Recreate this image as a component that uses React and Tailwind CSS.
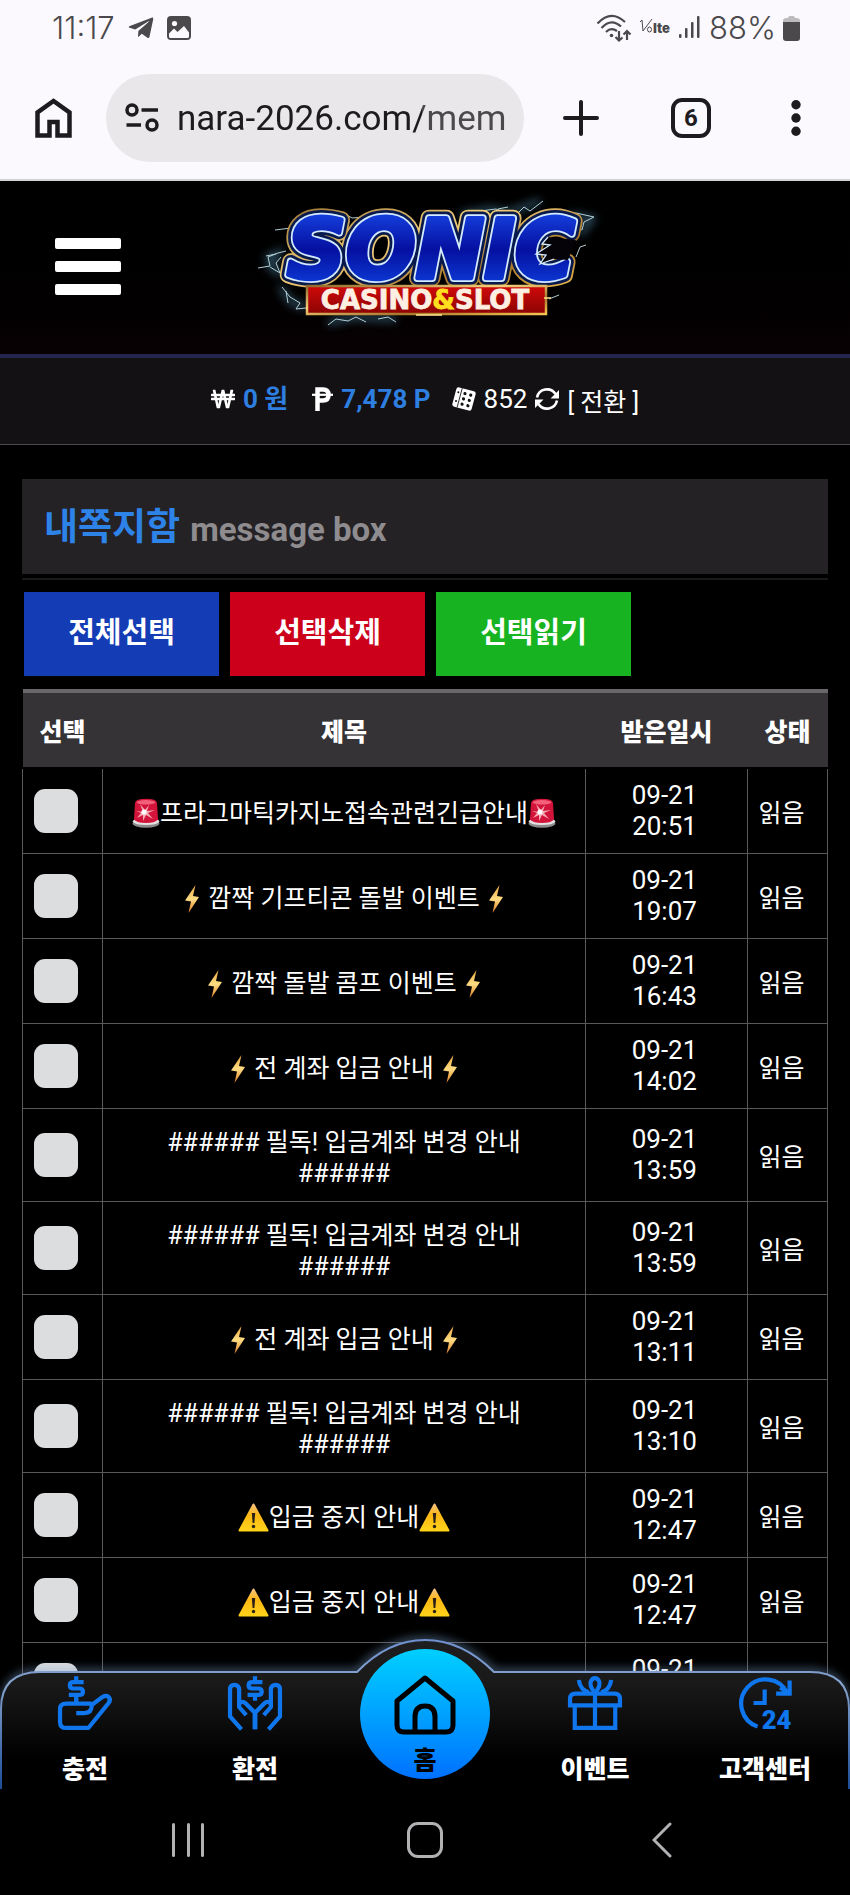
import { FaTelegramPlane, FaWonSign } from 'react-icons/fa';

// Message box page of the mobile casino site, inside the phone's browser

const MESSAGES = [
    { icon: 'siren', title: '프라그마틱카지노접속관련긴급안내', date: '09-21', time: '20:51' },
    { icon: 'bolt', title: '깜짝 기프티콘 돌발 이벤트', date: '09-21', time: '19:07' },
    { icon: 'bolt', title: '깜짝 돌발 콤프 이벤트', date: '09-21', time: '16:43' },
    { icon: 'bolt', title: '전 계좌 입금 안내', date: '09-21', time: '14:02' },
    { title: '###### 필독! 입금계좌 변경 안내 ######', date: '09-21', time: '13:59' },
    { title: '###### 필독! 입금계좌 변경 안내 ######', date: '09-21', time: '13:59' },
    { icon: 'bolt', title: '전 계좌 입금 안내', date: '09-21', time: '13:11' },
    { title: '###### 필독! 입금계좌 변경 안내 ######', date: '09-21', time: '13:10' },
    { icon: 'warning', title: '입금 중지 안내', date: '09-21', time: '12:47' },
    { icon: 'warning', title: '입금 중지 안내', date: '09-21', time: '12:47' },
    { icon: 'warning', title: '입금 중지 안내', date: '09-21', time: '12:47' },
];

function SirenIcon() {
    return (
        <svg viewBox="0 0 28 30" className="inline-block w-7 h-[30px] align-[-6px]" aria-hidden="true">
            <ellipse cx="14" cy="25.5" rx="13.5" ry="4.2" fill="#8d8a8c" />
            <path d="M.5 23.5Q2 21 4 21h20q2.500 0 3.500 2.500Q25 27 14 27T.5 23.500Z" fill="#e4e2e3" />
            <path d="M3 5Q3.500.8 14 .8T25 5l1 16.500Q23 25 14 25T2 21.500Z" fill="#d3143a" />
            <path d="M4.500 4.500Q6 2 14 2t9.500 2.500Q21 6.500 14 6.500T4.500 4.500Z" fill="#f2607a" />
            <path d="M11 14 8 6l5 6 4-5-2 6 8-1-7 3 5 6-7-4-3 6v-6l-6 3 4-5-5-2Z" fill="#f7a9b4" />
            <circle cx="12" cy="14" r="2.600" fill="#fff" />
        </svg>
    );
}

function BoltIcon() {
    return (
        <svg viewBox="0 0 20 30" className="inline-block w-5 h-[30px] align-[-7px]" aria-hidden="true">
            <defs>
                <linearGradient id="bolt" x1="0" y1="0" x2="0" y2="1">
                    <stop offset="0" stopColor="#e8a63c" />
                    <stop offset=".5" stopColor="#fddc83" />
                    <stop offset="1" stopColor="#e07c22" />
                </linearGradient>
            </defs>
            <path d="M13.500 1 3 16.500l6 1L6.500 29 17 13l-6-1Z" fill="url(#bolt)" />
        </svg>
    );
}

function WarningIcon() {
    return (
        <svg viewBox="0 0 31 29" className="inline-block w-[31px] h-[29px] align-[-6px]" aria-hidden="true">
            <defs>
                <linearGradient id="warn" x1="0" y1="0" x2="0" y2="1">
                    <stop offset="0" stopColor="#f7c27c" />
                    <stop offset=".4" stopColor="#fdb813" />
                    <stop offset="1" stopColor="#ffd21a" />
                </linearGradient>
            </defs>
            <path d="M15.500 1.500 29.500 27.500h-28Z" fill="url(#warn)" stroke="url(#warn)" strokeWidth="2" strokeLinejoin="round" />
            <path d="M13.800 10h3.400l-.8 10h-1.800Z" fill="#2b2118" />
            <circle cx="15.500" cy="23.500" r="1.700" fill="#2b2118" />
        </svg>
    );
}

const TITLE_ICONS = { siren: SirenIcon, bolt: BoltIcon, warning: WarningIcon };

function MessageTitle({ icon, title }) {
    const Icon = TITLE_ICONS[icon];
    if (!Icon) return title;
    const space = icon === 'bolt' ? ' ' : '';
    return <><Icon />{space}{title}{space}<Icon /></>;
}

function StatusBar() {
    return (
        <div className="flex items-center justify-between pl-[52px] pr-[50px] h-14 text-[#4b494c] font-['Inter',sans-serif] text-[31px] font-light">
            <div className="flex items-center gap-3">
                <span>11:17</span>
                <FaTelegramPlane className="w-7 h-7" />
                <svg viewBox="0 0 24 24" className="w-6 h-6" aria-hidden="true">
                    <rect width="24" height="24" rx="4" fill="currentColor" />
                    <circle cx="7.500" cy="7.500" r="2.600" fill="#fbf9fd" />
                    <path d="M2 17.500 7 12.500l3.500 3.500 6.500-6 5 6.500v4q0 1.500-1.500 1.500h-17Q2 22 2 20.500Z" fill="#fbf9fd" />
                </svg>
            </div>
            <div className="flex items-center gap-[7px]">
                <svg viewBox="0 0 36 28" className="w-9 h-7" fill="none" stroke="currentColor" strokeWidth="2.200" aria-hidden="true">
                    <path d="M1.500 9.500Q15 -5 29 8M5.500 14Q15 3.500 25 12.500M10 18Q15 13 21 17" />
                    <circle cx="15.500" cy="21.500" r="1.800" fill="currentColor" stroke="none" />
                    <path d="M23 17v9m-3.500-3 3.500 3.500 3.500-3M31 26v-9m-3.500 3.500 3.500-3.500 3.500 3.500" />
                </svg>
                <svg viewBox="0 0 32 20" className="w-8 h-5" fill="currentColor" aria-hidden="true">
                    <path d="M1 4l2-2 1 11L13 1" fill="none" stroke="currentColor" strokeWidth="1" />
                    <ellipse cx="10.500" cy="11.500" rx="2" ry="2.500" fill="none" stroke="currentColor" strokeWidth="1" />
                    <text x="14" y="15" fontSize="13" fontWeight="900" fontFamily="Inter, sans-serif">lte</text>
                </svg>
                <svg viewBox="0 0 22 24" className="w-6 h-6" fill="currentColor" aria-hidden="true">
                    <rect x="0" y="18" width="2.500" height="4" rx="1" />
                    <rect x="6" y="12" width="2.500" height="10" rx="1" />
                    <rect x="12" y="6" width="2.500" height="16" rx="1" />
                    <rect x="18" y="0" width="2.500" height="22" rx="1" />
                </svg>
                <span>88%</span>
                <svg viewBox="0 0 17 25" className="w-[17px] h-[25px]" aria-hidden="true">
                    <path d="M5 2q0-2 2-2h3q2 0 2 2h2q3 0 3 3v3H0V5q0-3 3-3Z" fill="#bdbbbe" />
                    <path d="M0 6h17v16q0 3-3 3H3q-3 0-3-3Z" fill="#4b494c" />
                </svg>
            </div>
        </div>
    );
}

function BrowserBar() {
    return (
        <div className="flex items-center h-[125px] pl-[35px] pr-[49px] border-b-2 border-[#d3d2d6] text-[#1d1b1e]">
            <button aria-label="홈페이지">
                <svg viewBox="0 0 38 40" className="w-[38px] h-10 block" fill="none" stroke="currentColor" strokeWidth="4.500" aria-hidden="true">
                    <path d="M2.500 37.500V14.500L18.500 3l16 11.500v23H22.500V24h-8v13.500Z" />
                </svg>
            </button>
            <div className="flex items-center flex-1 min-w-0 h-[88px] ml-[33px] pl-[19px] pr-[18px] rounded-full bg-[#e9e7ea]">
                <svg viewBox="0 0 34 30" className="w-[34px] h-[30px] shrink-0" fill="none" stroke="currentColor" strokeWidth="3.500" aria-hidden="true">
                    <circle cx="7" cy="7" r="5" />
                    <path d="M16.500 7H33M1.500 22H16" />
                    <circle cx="27" cy="22" r="5" />
                </svg>
                <input type="text" aria-label="주소" defaultValue="nara-2026.com/mem"
                    className="flex-1 min-w-0 ml-[18px] pt-1 text-[35px] text-transparent bg-clip-text bg-linear-to-r from-[#1d1b1e] from-[245px] to-[#4b494c] to-[245px] outline-none" />
            </div>
            <button className="ml-[39px]" aria-label="새 탭">
                <svg viewBox="0 0 36 36" className="w-9 h-9 block" stroke="currentColor" strokeWidth="4" strokeLinecap="round" aria-hidden="true">
                    <path d="M18 2v32M2 18h32" />
                </svg>
            </button>
            <button className="ml-[72px] w-10 h-10 flex items-center justify-center border-4 border-current rounded-[11px] text-2xl font-bold" aria-label="탭 6개">6</button>
            <button className="ml-20 p-0" aria-label="더보기">
                <svg viewBox="0 0 10 36" className="w-[10px] h-9 block" fill="currentColor" aria-hidden="true">
                    <circle cx="5" cy="4.800" r="4.700" />
                    <circle cx="5" cy="18" r="4.700" />
                    <circle cx="5" cy="31.200" r="4.700" />
                </svg>
            </button>
        </div>
    );
}

function Logo() {
    return (
        <svg viewBox="0 0 370 170" className="w-[370px] h-[170px]" role="img" aria-label="SONIC CASINO&SLOT">
            <defs>
                <linearGradient id="letters" x1="0" y1="0" x2="0" y2="1">
                    <stop offset="0" stopColor="#1a4ef0" />
                    <stop offset=".5" stopColor="#0510a0" />
                    <stop offset="1" stopColor="#0f48e8" />
                </linearGradient>
                <linearGradient id="gold" x1="0" y1="0" x2="1" y2="1">
                    <stop offset="0" stopColor="#8f6a2c" />
                    <stop offset=".4" stopColor="#f3cf7a" />
                    <stop offset=".7" stopColor="#a8762a" />
                    <stop offset="1" stopColor="#f5c552" />
                </linearGradient>
                <linearGradient id="plate" x1="0" y1="0" x2="0" y2="1">
                    <stop offset="0" stopColor="#d00a0a" />
                    <stop offset="1" stopColor="#8c0303" />
                </linearGradient>
                <filter id="halo" x="-20%" y="-40%" width="140%" height="180%">
                    <feGaussianBlur stdDeviation="4" />
                </filter>
                <text id="word" x="191" y="95" fontFamily="'DejaVu Sans', sans-serif" fontSize="82" fontWeight="700" fontStyle="italic" textAnchor="middle">SONIC</text>
            </defs>
            <g fill="none" stroke="#3f6f88" strokeWidth="6" opacity=".7" filter="url(#halo)">
                <path d="M25 76 38 70 30 84 42 92M220 32 250 26 268 30 300 18M330 32 352 36 340 52M40 104 52 120 66 124M88 140 112 134 156 136" />
            </g>
            <g fill="none" stroke="#c4e4ec" strokeWidth="1" strokeLinejoin="round" opacity=".9">
                <path d="M18 85 30 83 28 74 38 70 46 68M26 73l10-2M30 84l10 6-4-10 5-6M35 47l16-2 8-3M90 37l14-7 8 5 14-1 8 3" />
                <path d="M222 35 240 28 256 26 266 30 274 34 284 24 290 28 303 18M258 26l10-2M318 33l18-3 18 4-10 5-2 8-10-4" />
                <path d="M42 104 50 114 60 120 56 126 66 125M46 108l2 12M88 142 96 136 108 138 116 134 126 139M138 136 148 134 156 139M309 116l10-4M336 74l4-10 6-2" />
            </g>
            <g strokeLinejoin="round">
                <use href="#word" fill="none" stroke="url(#gold)" strokeWidth="17" />
                <use href="#word" fill="none" stroke="#07194d" strokeWidth="13.500" />
                <use href="#word" fill="none" stroke="#d4ebff" strokeWidth="8" />
                <use href="#word" fill="url(#letters)" stroke="url(#letters)" strokeWidth="4.500" />
            </g>
            {/* torn edge inside the last letter */}
            <path d="M308 54l-6 7 8 1-14 9 10 1-6 9 14-5 14 1 8-20Z" fill="#060308" />
            <path d="M308 54l-6 7 8 1-14 9 10 1-6 9 14-5" fill="none" stroke="#d4ebff" strokeWidth="1.300" />
            <rect x="67" y="103" width="239" height="28" fill="url(#plate)" stroke="url(#gold)" strokeWidth="2.500" />
            <path d="M176 132h26M304 115h7" stroke="#ffe28a" strokeWidth="1.500" />
            <text x="185" y="126" fontFamily="'DejaVu Sans', sans-serif" fontSize="26" fontWeight="700" textAnchor="middle" fill="#fdf0e2" stroke="#fdf0e2" strokeWidth=".8">
                CASINO<tspan fill="#ffdf1e" stroke="#ffdf1e">&amp;</tspan>SLOT
            </text>
        </svg>
    );
}

function SiteHeader() {
    return (
        <header className="relative flex items-center justify-center h-[177px] border-b-4 border-[#23254f] bg-linear-to-b from-black to-[#080103]">
            <button className="absolute left-[55px] top-[57px] flex flex-col gap-3 w-[66px]" aria-label="메뉴">
                <span className="h-[11px] w-full rounded-xs bg-white" />
                <span className="h-[11px] w-full rounded-xs bg-white" />
                <span className="h-[11px] w-full rounded-xs bg-white" />
            </button>
            <a href="#home"><Logo /></a>
        </header>
    );
}

function BalanceBar() {
    return (
        <div className="flex items-center justify-center h-[87px] pb-1 border-b border-[#4c4a4d] bg-[#131114] text-[26px] leading-8">
            <FaWonSign className="w-6 h-6" />
            <span className="ml-2 font-bold text-[#2e7fe0]">0 원</span>
            <svg viewBox="0 0 21 24" className="w-[21px] h-6 ml-6" fill="none" stroke="currentColor" aria-hidden="true">
                <path d="M5.500 24V2.500h5.500q5.500 0 5.500 5.500t-5.500 5.500H6" strokeWidth="4.500" />
                <path d="M0 7.800h21" strokeWidth="2.200" />
            </svg>
            <span className="ml-2 font-bold text-[#2e7fe0]">7,478 P</span>
            <svg viewBox="0 0 24 24" className="w-6 h-6 ml-[21px]" aria-hidden="true">
                <g transform="rotate(15 12 12)">
                    <rect x="2" y="2" width="20" height="20" rx="2.500" fill="#fff" />
                    <path d="M7.500 2v20" stroke="#131114" strokeWidth=".8" />
                    <g fill="#131114">
                        <circle cx="4.800" cy="7" r="1" /><circle cx="4.800" cy="16" r="1" />
                        <circle cx="11.500" cy="6.500" r="1.600" /><circle cx="11.500" cy="12" r="1.600" /><circle cx="11.500" cy="17.500" r="1.600" />
                        <circle cx="17.500" cy="6.500" r="1.600" /><circle cx="17.500" cy="12" r="1.600" /><circle cx="17.500" cy="17.500" r="1.600" />
                    </g>
                </g>
            </svg>
            <span className="ml-2">852</span>
            <button className="flex items-center">
                <svg viewBox="0 0 24 24" className="w-6 h-6 ml-2" fill="none" stroke="currentColor" strokeWidth="2.600" aria-hidden="true">
                    <path d="M2 10.500A10.200 10.200 0 0 1 20.500 7M22 13.500A10.200 10.200 0 0 1 3.500 17" />
                    <path d="M24 3v8.500h-8.500ZM0 21v-8.500h8.500Z" fill="currentColor" stroke="none" />
                </svg>
                <span className="ml-2 pt-2 text-[25px]">[ 전환 ]</span>
            </button>
        </div>
    );
}

function MessageTable() {
    return (
        <table className="w-full mt-[13px] border-collapse table-fixed text-[25px] leading-[31px]">
            <colgroup>
                <col className="w-[80px]" />
                <col />
                <col className="w-[162px]" />
                <col className="w-[80px]" />
            </colgroup>
            <thead>
                <tr className="h-[77px] bg-[#353335] border-t-4 border-t-[#696769] border-b-2 border-b-black">
                    <th className="p-0 pt-1 font-black">선택</th>
                    <th className="p-0 pt-1 font-black">제목</th>
                    <th className="p-0 pt-1 font-black">받은일시</th>
                    <th className="p-0 pt-1 font-black">상태</th>
                </tr>
            </thead>
            <tbody>
                {MESSAGES.map((m, i) => (
                    <tr key={i} className="h-[85px]">
                        <td className="border border-[#5a585b] p-0 pl-[11px]">
                            <input type="checkbox" aria-label={m.title}
                                className="block appearance-none w-11 h-11 rounded-[11px] bg-[#dcdddf] checked:bg-[#2e83e8]" />
                        </td>
                        <td className="border border-[#5a585b] px-5 pt-[18px] pb-3 text-center break-keep">
                            <MessageTitle icon={m.icon} title={m.title} />
                        </td>
                        <td className="border border-[#5a585b] pl-7 pr-8 py-0 text-center text-[26px]">{m.date}<br />{m.time}</td>
                        <td className="border border-[#5a585b] p-0 pt-[6px] pr-3 text-center">읽음</td>
                    </tr>
                ))}
            </tbody>
        </table>
    );
}

// S with a short stem above and below, centred on x
function DollarSign({ x }) {
    return <path d={`M${x + 22} 18H${x - 8}q-11 0-11 9.500t11 9.500H${x + 9}q11 0 11 9.500t-11 9.500H${x - 22}M${x} 1v16M${x} 57v16`} />;
}

function NavIcon({ children }) {
    return (
        <svg viewBox="0 0 160 160" className="w-[54px] h-[54px] overflow-visible" fill="none" stroke="#0f76ee" strokeWidth="12.500" aria-hidden="true">
            {children}
        </svg>
    );
}

function DepositIcon() {
    return (
        <NavIcon>
            <DollarSign x={54} />
            <path d="M54 66v14M100 82H24Q6 82 6 98v38q0 18 18 18h66l60-74q8-12-1-19-8-5-17 1L100 86q0 24-22 24H54" strokeLinejoin="round" />
        </NavIcon>
    );
}

function WithdrawIcon() {
    const hand = 'M40 158 6 120V40Q6 26 19 26t14 14v52l21 24M33 84q6-12 18-4l28 28v50';
    return (
        <NavIcon>
            <DollarSign x={80} />
            <path d={hand} />
            <path d={hand} transform="translate(160 0) scale(-1 1)" />
        </NavIcon>
    );
}

function GiftIcon() {
    return (
        <NavIcon>
            <path d="M6 87V68q0-16 16-16h116q16 0 16 16v19ZM20 87v67h120V87M80 52v102" />
            <path d="M80 50Q62 30 68 15q4-9 12-9t12 9q6 15-12 35ZM32 12q4 30 30 36M128 12q-4 30-30 36" />
        </NavIcon>
    );
}

function SupportIcon() {
    return (
        <NavIcon>
            <path d="M58 150A72 72 0 1 1 146 50" />
            <path d="M153 13v39h-40M153 52l-28-18" />
            <path d="M79 40v40H46" />
            <text x="70" y="157" fontSize="76" fontWeight="900" fontFamily="Roboto, sans-serif" fill="#0f76ee" stroke="none">24</text>
        </NavIcon>
    );
}

function NavItem({ icon: Icon, label }) {
    return (
        <a href={`#${label}`} className="flex flex-col items-center pt-[37px]">
            <Icon />
            <span className="mt-6 text-[25px] leading-8 font-black">{label}</span>
        </a>
    );
}

function BottomNav() {
    const edge = 'M1 150V70Q1 33 40 33H357Q388 1 425 1T494 33H810Q849 33 849 70V150';
    return (
        <nav className="absolute inset-x-0 bottom-0 h-[150px]">
            <svg viewBox="0 0 850 150" preserveAspectRatio="none" className="absolute inset-0 w-full h-full overflow-visible" aria-hidden="true">
                <defs>
                    <linearGradient id="nav-fill" x1="0" y1="0" x2="0" y2="1">
                        <stop offset="0" stopColor="#1e1e20" />
                        <stop offset=".3" stopColor="#191919" />
                        <stop offset=".8" stopColor="#000" />
                    </linearGradient>
                    <linearGradient id="nav-edge" x1="0" y1="0" x2="0" y2="1">
                        <stop offset="0" stopColor="#6f90cf" />
                        <stop offset=".3" stopColor="#86a3cc" />
                        <stop offset="1" stopColor="#1d4d96" />
                    </linearGradient>
                    <filter id="nav-glow" x="-5%" y="-20%" width="110%" height="140%">
                        <feGaussianBlur stdDeviation="4" />
                    </filter>
                </defs>
                <path d="M3 76Q1 33 40 33H357Q388 1 425 1T494 33H810Q849 33 847 76" fill="none" stroke="#7ba3cf" strokeWidth="7" opacity=".5" filter="url(#nav-glow)" />
                <path d={edge} fill="url(#nav-fill)" stroke="url(#nav-edge)" strokeWidth="2" />
            </svg>
            <div className="relative grid grid-cols-5 h-full">
                <NavItem icon={DepositIcon} label="충전" />
                <NavItem icon={WithdrawIcon} label="환전" />
                <a href="#home" className="flex flex-col items-center justify-self-center w-[130px] h-[130px] mt-[10px] pt-[26px] rounded-full bg-linear-to-b from-[#00cfff] to-[#0070ff] text-black">
                    <svg viewBox="0 0 62 60" className="w-[62px] h-[60px]" fill="none" stroke="currentColor" strokeWidth="5" strokeLinejoin="round" aria-hidden="true">
                        <path d="M3 26 31 3l28 23v24q0 7-7 7H10q-7 0-7-7Z" />
                        <path d="M21 57V42q0-11 10-11t10 11v15" />
                    </svg>
                    <span className="mt-2 text-[25px] leading-9 font-black">홈</span>
                </a>
                <NavItem icon={GiftIcon} label="이벤트" />
                <NavItem icon={SupportIcon} label="고객센터" />
            </div>
        </nav>
    );
}

function SystemNav() {
    return (
        <div className="grid grid-cols-3 items-center justify-items-center h-[106px] px-[70px] pb-2 pt-1 text-[#b3b1b4]">
            <button className="flex justify-between w-8 h-[34px]" aria-label="최근 앱">
                <span className="w-[3px] h-full rounded-full bg-current" />
                <span className="w-[3px] h-full rounded-full bg-current" />
                <span className="w-[3px] h-full rounded-full bg-current" />
            </button>
            <button className="w-9 h-9 border-[3px] border-current rounded-[11px]" aria-label="홈 화면" />
            <button aria-label="뒤로">
                <svg viewBox="0 0 20 36" className="w-5 h-9 block" fill="none" stroke="currentColor" strokeWidth="3" strokeLinecap="round" aria-hidden="true">
                    <path d="M18 2 2 18l16 16" />
                </svg>
            </button>
        </div>
    );
}

export default function App() {
    return (
        <div lang="ko" className="flex flex-col h-screen overflow-hidden bg-black text-white font-[Roboto,'Noto_Sans_CJK_KR',sans-serif]">
            <div className="shrink-0 bg-[#fbf9fd]">
                <StatusBar />
                <BrowserBar />
            </div>
            <div className="relative flex-1 min-h-0 overflow-hidden">
                <SiteHeader />
                <BalanceBar />
                <main className="px-[22px] pt-[34px]">
                    <h1 className="flex items-center h-[95px] px-[22px] pt-[2px] bg-[#242225] text-[37px] font-bold text-[#2e83e8]">
                        내쪽지함
                        <small className="ml-[10px] pt-1 text-[33px] text-[#8e8c8f]">message box</small>
                    </h1>
                    <div className="mt-1 border-t-2 border-[#19181a]" />
                    <div className="flex gap-[11px] mt-3 px-[2px] text-[29px] font-bold">
                        <button className="w-[195px] h-[84px] bg-[#143cb4]">전체선택</button>
                        <button className="w-[195px] h-[84px] bg-[#cc001b]">선택삭제</button>
                        <button className="w-[195px] h-[84px] bg-[#18b321]">선택읽기</button>
                    </div>
                    <MessageTable />
                </main>
                <BottomNav />
            </div>
            <SystemNav />
        </div>
    );
}
